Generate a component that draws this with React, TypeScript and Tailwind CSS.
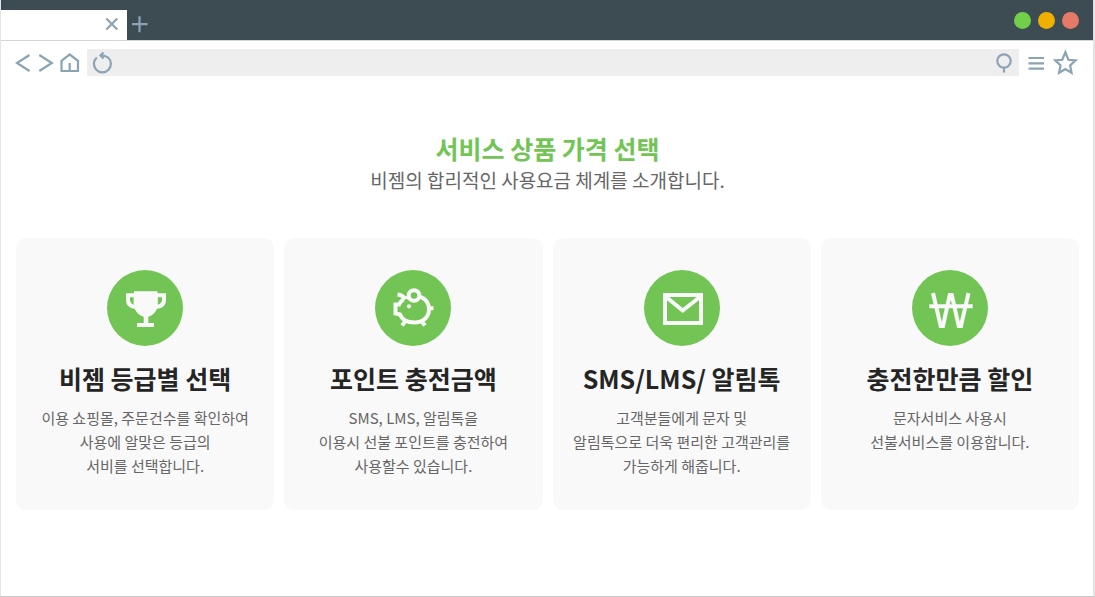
import type { ReactNode } from "react";

function TrophyIcon() {
  return (
    <svg viewBox="0 0 76 76" className="size-full" fill="none" aria-hidden="true">
      <path d="M27 21.300h23.500v1.900h8.500v6.500c0 5.500-3.500 9-9 9c-2 4.500-5 7-8.700 8v6.300h5.700v4H30v-4h6.700v-6.300c-4-1-7-3.500-9-8c-5 0-8.700-3.500-8.700-9v-6.500h8z" fill="currentColor" />
      <path d="M23 27.300h3.600v7.500c-2.200-.8-3.600-2.500-3.600-5.200zM55 27.300h-4.200v7.500c2.600-.8 4.200-2.500 4.200-5.200z" fill="#72c555" />
    </svg>
  );
}

function PiggyIcon() {
  return (
    <svg viewBox="0 0 76 76" className="size-full" fill="none" stroke="currentColor" strokeWidth="4" aria-hidden="true">
      <path d="M31.500 28C34 26.600 36.500 26 39.500 26C49 26 54 32 54 39.500S48 52.500 39.500 52.500C32 52.500 27 49.500 25 44.500L20.500 43.500V34.500H24C25 32 26.500 30.600 28.500 29.500" />
      <path d="M22.500 24.500C27.500 25 29 27 30.500 29.500M54 38.300h4.500M30.500 51l-3.500 4.500M46.500 51l3.500 4.500" />
      <circle cx="39" cy="25.500" r="5.300" fill="#72c555" />
      <circle cx="34" cy="36.300" r="2.100" fill="currentColor" stroke="none" />
    </svg>
  );
}

function MailIcon() {
  return (
    <svg viewBox="0 0 76 76" className="size-full" fill="none" stroke="currentColor" strokeWidth="4" aria-hidden="true">
      <rect x="21" y="25" width="36" height="28" />
      <path d="M21.500 26.500L38.700 40.500L56.500 26.500" />
    </svg>
  );
}

function WonIcon() {
  return (
    <svg viewBox="0 0 76 76" className="size-full" fill="none" stroke="currentColor" strokeWidth="4" aria-hidden="true">
      <path d="M21 23L28.700 56H31L37.700 25H39.800L46.700 56H49L56.500 23" />
      <path d="M17.300 36.300H60.700" />
    </svg>
  );
}

type Service = { title: string; lines: string[]; icon: ReactNode };

const services: Service[] = [
  {
    title: "비젬 등급별 선택",
    lines: ["이용 쇼핑몰, 주문건수를 확인하여", "사용에 알맞은 등급의", "서비를 선택합니다."],
    icon: <TrophyIcon />,
  },
  {
    title: "포인트 충전금액",
    lines: ["SMS, LMS, 알림톡을", "이용시 선불 포인트를 충전하여", "사용할수 있습니다."],
    icon: <PiggyIcon />,
  },
  {
    title: "SMS/LMS/ 알림톡",
    lines: ["고객분들에게 문자 및", "알림톡으로 더욱 편리한 고객관리를", "가능하게 해줍니다."],
    icon: <MailIcon />,
  },
  {
    title: "충전한만큼 할인",
    lines: ["문자서비스 사용시", "선불서비스를 이용합니다."],
    icon: <WonIcon />,
  },
];

function Glyph({ className, children }: { className: string; children: ReactNode }) {
  return (
    <svg className={className} viewBox="0 0 24 24" fill="none" stroke="currentColor" strokeWidth="2.200" aria-hidden="true">
      {children}
    </svg>
  );
}

function BrowserBar() {
  return (
    <header className="text-[#8aa4b4]">
      <div className="flex h-[41px] items-end justify-between border-b border-[#d3d6d8] bg-[#3d4b52]">
        <div className="flex items-end">
          <div className="flex h-[30px] w-[126px] items-center justify-end bg-white pr-1">
            <button type="button" aria-label="탭 닫기" className="flex">
              <Glyph className="size-6"><path d="M7.300 5.500l11 11M18.300 5.500l-11 11" /></Glyph>
            </button>
          </div>
          <button type="button" aria-label="새 탭" className="flex h-[30px] items-center">
            <Glyph className="size-6"><path d="M12.500 3.200v16M5 11.200h15.500" /></Glyph>
          </button>
        </div>
        <div className="flex h-10 items-center gap-[7px] pr-3.5">
          <span className="size-[17px] rounded-full bg-[#72cf49]" />
          <span className="size-[17px] rounded-full bg-[#f0b000]" />
          <span className="size-[17px] rounded-full bg-[#e67a66]" />
        </div>
      </div>
      <nav className="flex h-[43px] items-center bg-white pr-3.5 pl-2.5">
        <button type="button" aria-label="뒤로" className="flex">
          <Glyph className="size-6"><path d="M18.500 4L6 12L18.500 20" /></Glyph>
        </button>
        <button type="button" aria-label="앞으로" className="flex">
          <Glyph className="size-6"><path d="M4.300 4L16.800 12L4.300 20" /></Glyph>
        </button>
        <button type="button" aria-label="홈" className="flex">
          <Glyph className="size-6"><path d="M2.500 20V9.800L10.700 3.500L19 9.800V20zM10.700 20V12" /></Glyph>
        </button>
        <div className="ml-1 flex h-[27px] min-w-0 flex-1 items-center bg-[#eeeeee] px-1">
          <button type="button" aria-label="새로 고침" className="flex">
            <Glyph className="size-6">
              <path d="M5.800 6.500A8.500 8.500 0 1 0 17 6.500Q14.500 4.500 10 4.500M12.500 1.500L9.500 4.500L12.500 7.500" />
            </Glyph>
          </button>
          <input type="text" aria-label="주소" className="h-full min-w-0 flex-1 bg-transparent px-2 text-sm text-[#555555] outline-none" />
          <button type="button" aria-label="검색" className="flex">
            <Glyph className="size-6"><circle cx="13" cy="10" r="6.700" /><path d="M13 16.500v5" /></Glyph>
          </button>
        </div>
        <button type="button" aria-label="메뉴" className="ml-1 flex">
          <Glyph className="size-6"><path d="M5.500 7h15.500M5.500 12.300h15.500M5.500 17.600h15.500" /></Glyph>
        </button>
        <button type="button" aria-label="즐겨찾기" className="ml-1 flex">
          <Glyph className="size-7">
            <path d="M12.300 2.800L14.900 9.200L21 9.700L16.400 14.100L17.600 20.400L12.300 17.200L6.900 20.400L8.200 14.100L3.600 9.700L9.700 9.200z" strokeWidth="1.900" />
          </Glyph>
        </button>
      </nav>
    </header>
  );
}

function ServiceCard({ title, lines, icon }: Service) {
  return (
    <li className="flex flex-col items-center rounded-[10px] bg-[#f9f9f9] py-8 text-center">
      <div className="size-[76px] rounded-full bg-[#72c555] text-[#f9f9f9]">{icon}</div>
      <h2 className="mt-3 text-[25px] leading-10 font-bold text-[#252525]">{title}</h2>
      <p className="mt-2 text-[15px] leading-6 text-[#666666]">
        {lines.map((line) => (
          <span key={line} className="block whitespace-nowrap">{line}</span>
        ))}
      </p>
    </li>
  );
}

export default function App() {
  return (
    <div className="flex min-h-screen flex-col border-r-2 border-b border-l border-[#e3e3e3] border-b-[#c8c8c8] bg-white font-['Noto_Sans_CJK_KR',sans-serif]">
      <BrowserBar />
      <main className="pt-12 pr-3.5 pb-8 pl-[15px]">
        <h1 className="text-center text-[25px] leading-8 font-bold text-[#72c555]">서비스 상품 가격 선택</h1>
        <p className="text-center text-[19px] leading-8 text-[#666666]">비젬의 합리적인 사용요금 체계를 소개합니다.</p>
        <ul className="mt-[42px] grid grid-cols-4 gap-2.5">
          {services.map((service) => (
            <ServiceCard key={service.title} {...service} />
          ))}
        </ul>
      </main>
    </div>
  );
}
